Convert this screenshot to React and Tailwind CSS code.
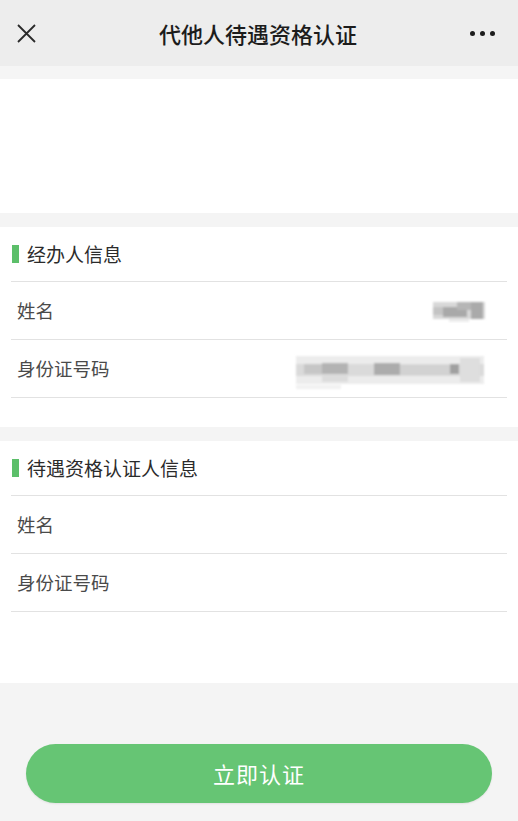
import React from 'react';

const font = { fontFamily: '"Noto Sans CJK SC", "Noto Sans", sans-serif' };

function NameMosaic() {
  return (
    <svg width="56" height="24" viewBox="0 0 56 24">
      <defs>
        <filter id="b1"><feGaussianBlur stdDeviation="0.8" /></filter>
      </defs>
      <g filter="url(#b1)">
        <rect x="2" y="3" width="52" height="17" fill="#d8d8d8" />
        <rect x="2" y="8" width="10" height="8" fill="#c4c4c4" />
        <rect x="12" y="8" width="24" height="10" fill="#a9a9a9" />
        <rect x="26" y="3" width="14" height="8" fill="#b6b6b6" />
        <rect x="40" y="3" width="12" height="17" fill="#aaaaaa" />
        <rect x="18" y="20" width="20" height="3" fill="#ececec" />
      </g>
    </svg>
  );
}

function IdMosaic() {
  return (
    <svg width="196" height="38" viewBox="0 0 196 38">
      <defs>
        <filter id="b2"><feGaussianBlur stdDeviation="1" /></filter>
      </defs>
      <g filter="url(#b2)">
        <rect x="4" y="3" width="188" height="28" fill="#ececec" />
        <rect x="4" y="11" width="188" height="12" fill="#dadada" />
        <rect x="12" y="11" width="20" height="10" fill="#c6c6c6" />
        <rect x="30" y="10" width="26" height="13" fill="#b3b3b3" />
        <rect x="30" y="21" width="26" height="8" fill="#dcdcdc" />
        <rect x="82" y="10" width="26" height="12" fill="#acacac" />
        <rect x="108" y="12" width="50" height="10" fill="#d2d2d2" />
        <rect x="158" y="11" width="9" height="10" fill="#a0a0a0" />
        <rect x="168" y="5" width="20" height="24" fill="#dedede" />
        <rect x="4" y="32" width="45" height="4" fill="#f1f1f1" />
      </g>
    </svg>
  );
}

function SectionTitle({ children }) {
  return (
    <div className="flex items-center h-[54px] pl-3">
      <span className="w-[7px] h-[18px] bg-[#5cbf6a] mr-[8px]" />
      <span className="text-[19px] text-[#2b2b2b]">{children}</span>
    </div>
  );
}

function Row({ label, value }) {
  return (
    <div className="flex items-center justify-between h-[58px] mx-[11px] border-t border-[#e2e2e2]">
      <span className="text-[18.5px] text-[#4a4a4a] pl-[6px]">{label}</span>
      {value}
    </div>
  );
}

export default function App() {
  return (
    <div className="w-[518px] h-[821px] bg-[#f4f4f4] flex flex-col overflow-hidden" style={font}>
      {/* header */}
      <div className="h-[66px] bg-[#ededed] flex items-center justify-between px-[17px]">
        <svg width="19" height="19" viewBox="0 0 19 19" className="mt-[1px]">
          <path d="M1 1 L18 18 M18 1 L1 18" stroke="#2a2a2a" strokeWidth="1.8" />
        </svg>
        <h1 className="text-[22px] font-medium text-[#1c1c1c] pl-[10px]">代他人待遇资格认证</h1>
        <div className="flex gap-[5px] items-center pr-[6px]">
          <span className="w-[5px] h-[5px] rounded-full bg-[#1c1c1c]" />
          <span className="w-[5px] h-[5px] rounded-full bg-[#1c1c1c]" />
          <span className="w-[5px] h-[5px] rounded-full bg-[#1c1c1c]" />
        </div>
      </div>

      <div className="h-[13px] bg-[#f5f5f5]" />
      <div className="h-[134px] bg-white" />
      <div className="h-[14px] bg-[#f4f4f4]" />

      {/* operator info */}
      <div className="bg-white h-[200px]">
        <SectionTitle>经办人信息</SectionTitle>
        <Row label="姓名" value={<div className="pr-[20px]"><NameMosaic /></div>} />
        <Row label="身份证号码" value={<div className="pr-[19px] pt-[6px]"><IdMosaic /></div>} />
        <div className="mx-[11px] border-t border-[#e2e2e2]" />
      </div>

      <div className="h-[14px] bg-[#f4f4f4]" />

      {/* beneficiary info */}
      <div className="bg-white h-[242px]">
        <SectionTitle>待遇资格认证人信息</SectionTitle>
        <Row label="姓名" />
        <Row label="身份证号码" />
        <div className="mx-[11px] border-t border-[#e2e2e2]" />
      </div>

      <div className="flex-1 flex flex-col pt-[61px] px-[26px]">
        <button className="h-[59px] w-full rounded-full bg-[#66c574] text-white text-[22px] tracking-[1px] shadow-[0_1px_2px_rgba(0,0,0,0.08)]">
          立即认证
        </button>
      </div>
    </div>
  );
}
